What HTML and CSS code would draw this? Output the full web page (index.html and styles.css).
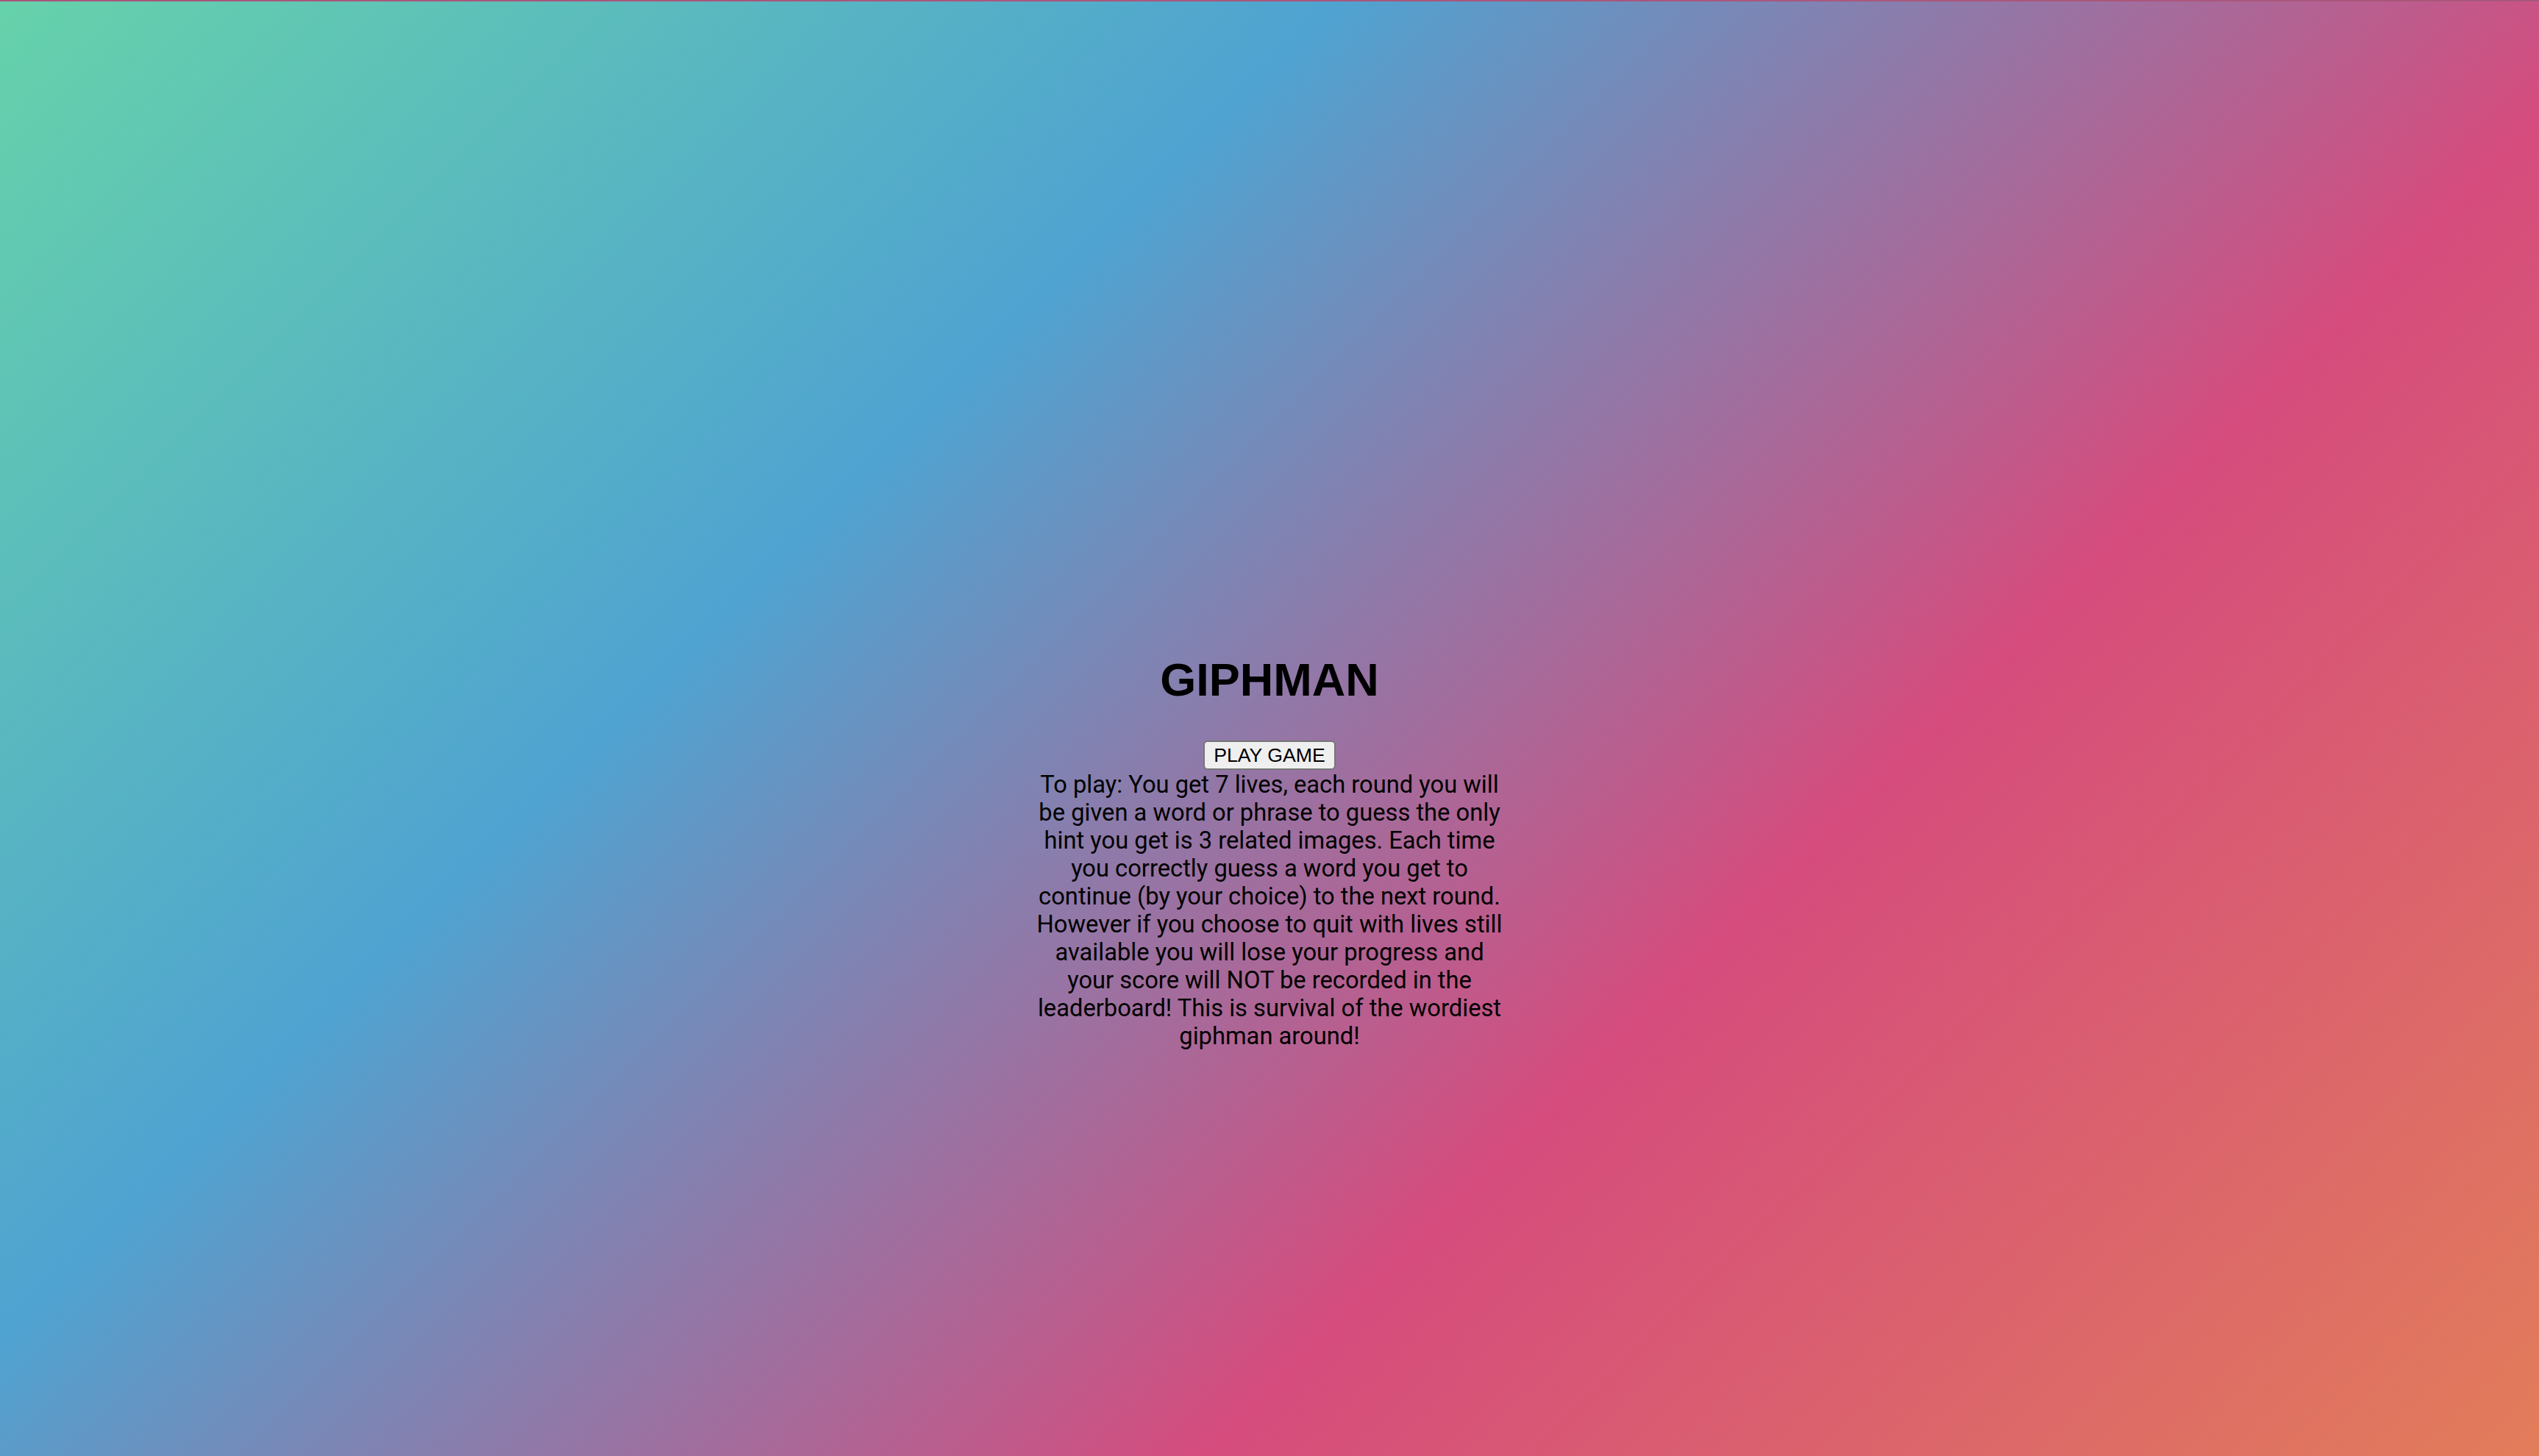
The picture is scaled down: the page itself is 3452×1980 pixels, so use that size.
FILE: index.html
```html
<!DOCTYPE html>
<html lang="en">
<head>
<meta charset="utf-8">
<title>GIPHMAN</title>
<link rel="stylesheet" href="styles.css">
</head>
<body>
<div class="topline"></div>
<main class="page">
  <section class="intro">
    <h1 class="title">GIPHMAN</h1>
    <button class="play-btn" type="button">PLAY GAME</button>
    <p class="rules">To play: You get 7 lives, each round you will be given a word or phrase to guess the only hint you get is 3 related images. Each time you correctly guess a word you get to continue (by your choice) to the next round. However if you choose to quit with lives still available you will lose your progress and your score will NOT be recorded in the leaderboard! This is survival of the wordiest giphman around!</p>
  </section>
</main>
</body>
</html>
```

FILE: styles.css
```css
html, body {
  margin: 0;
  padding: 0;
  height: 100%;
}

body {
  min-height: 100vh;
  background: linear-gradient(135deg, #66d2aa 0%, #4fa3d1 33.5%, #d54c7d 66.5%, #e27d5a 100%);
  font-family: Roboto, "Liberation Sans", Arial, sans-serif;
  color: #000;
  overflow: hidden;
}

.topline {
  height: 2px;
  background: #a9577c;
}

.page {
  display: flex;
  justify-content: center;
  padding-top: 885px;
}

.intro {
  display: flex;
  flex-direction: column;
  align-items: center;
  width: 640px;
}

.title {
  margin: 0 0 46px;
  font-family: "Liberation Sans", Arial, sans-serif;
  font-weight: 700;
  font-size: 63px;
  line-height: 74px;
}

.play-btn {
  box-sizing: border-box;
  height: 40px;
  padding: 0 12px;
  border: 2px solid #767676;
  border-radius: 6px;
  background: #efefef;
  color: #000;
  font-family: "Liberation Sans", Arial, sans-serif;
  font-size: 26.67px;
  line-height: 36px;
}

.rules {
  margin: 1px 0 0;
  width: 640px;
  text-align: center;
  font-size: 32.7px;
  line-height: 38px;
}
```
